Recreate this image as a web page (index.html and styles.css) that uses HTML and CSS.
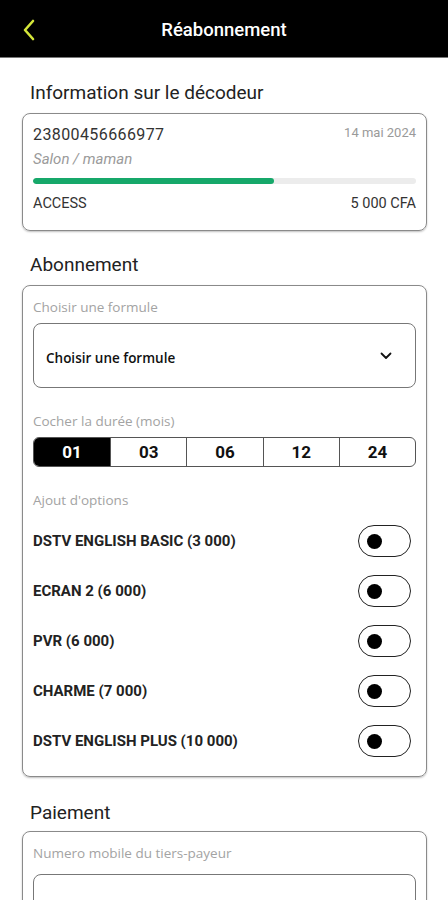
FILE: index.html
```html
<!DOCTYPE html>
<html lang="fr">
<head>
<meta charset="utf-8">
<title>Réabonnement</title>
<link rel="stylesheet" href="styles.css">
</head>
<body>
<header class="topbar">
  <span class="back">
    <svg width="14" height="22" viewBox="0 0 14 22"><path d="M11 2 L3 11 L11 20" fill="none" stroke="#d4e63a" stroke-width="2.6" stroke-linecap="round" stroke-linejoin="round"/></svg>
  </span>
  <h1 class="topbar-title">Réabonnement</h1>
</header>
<main class="content">
  <h2 class="section-title first">Information sur le décodeur</h2>
  <section class="card info-card">
    <div class="row between">
      <span class="decoder-num">23800456666977</span>
      <span class="date">14 mai 2024</span>
    </div>
    <div class="location">Salon / maman</div>
    <div class="progress"><div class="progress-fill" style="width:63%"></div></div>
    <div class="row between plan-row">
      <span>ACCESS</span>
      <span>5 000 CFA</span>
    </div>
  </section>

  <h2 class="section-title">Abonnement</h2>
  <section class="card form-card">
    <div class="label">Choisir une formule</div>
    <div class="select">
      <span>Choisir une formule</span>
      <svg width="12" height="8" viewBox="0 0 12 8"><path d="M1.5 1.5 L6 6 L10.5 1.5" fill="none" stroke="#111" stroke-width="1.8" stroke-linecap="round" stroke-linejoin="round"/></svg>
    </div>
    <div class="label gap-lg">Cocher la durée (mois)</div>
    <div class="segments">
      <div class="seg active">01</div>
      <div class="seg">03</div>
      <div class="seg">06</div>
      <div class="seg">12</div>
      <div class="seg">24</div>
    </div>
    <div class="label gap-lg">Ajout d'options</div>
    <div class="options">
      <div class="option"><span>DSTV ENGLISH BASIC (3 000)</span><span class="toggle"><span class="knob"></span></span></div>
      <div class="option"><span>ECRAN 2 (6 000)</span><span class="toggle"><span class="knob"></span></span></div>
      <div class="option"><span>PVR (6 000)</span><span class="toggle"><span class="knob"></span></span></div>
      <div class="option"><span>CHARME (7 000)</span><span class="toggle"><span class="knob"></span></span></div>
      <div class="option"><span>DSTV ENGLISH PLUS (10 000)</span><span class="toggle"><span class="knob"></span></span></div>
    </div>
  </section>

  <h2 class="section-title last">Paiement</h2>
  <section class="card pay-card">
    <div class="label">Numero mobile du tiers-payeur</div>
    <div class="input"></div>
  </section>
</main>
</body>
</html>
```

FILE: styles.css
```css
* { box-sizing: border-box; }
html, body { margin: 0; padding: 0; }
body {
  font-family: Roboto, "Liberation Sans", sans-serif;
  background: #fff;
  color: #222;
  width: 448px;
  height: 900px;
  overflow: hidden;
}
.topbar {
  height: 58px;
  background: #000;
  border-bottom: 1px solid #777;
  display: flex;
  align-items: center;
  justify-content: center;
  position: relative;
}
.back {
  position: absolute;
  left: 22px;
  top: 19px;
  display: flex;
}
.topbar-title {
  margin: 0;
  color: #fff;
  font-size: 18.5px;
  font-weight: 500;
  line-height: 22px;
  padding-top: 2px;
}
.content {
  padding: 0 21px 0 22px;
}
.section-title {
  margin: 22px 0 8px 8px;
  font-size: 19px;
  font-weight: 400;
  line-height: 24px;
  color: #222;
}
.section-title.first { margin-top: 23px; }
.section-title.last { margin-top: 24px; margin-bottom: 6px; }
.card {
  border: 1px solid #8a8a8a;
  border-radius: 8px;
  box-shadow: 0 1px 2px rgba(0,0,0,0.25);
  padding: 0 10px;
}
.row { display: flex; align-items: center; }
.between { justify-content: space-between; }
.info-card { padding-top: 11px; padding-bottom: 17px; }
.info-card .row:first-child { align-items: flex-start; height: 20px; }
.decoder-num { font-size: 16px; letter-spacing: 0.4px; line-height: 20px; color: #333; }
.date { font-size: 13px; line-height: 16px; color: #9a9a9a; }
.location { margin-top: 5px; font-size: 15px; line-height: 18px; font-style: italic; color: #9a9a9a; }
.progress {
  margin-top: 10px;
  height: 6px;
  background: #ececec;
  border-radius: 3px;
  overflow: hidden;
}
.progress-fill { height: 100%; background: #16a86a; border-radius: 3px; }
.plan-row { margin-top: 11px; font-size: 14.5px; line-height: 18px; color: #333; }

.form-card { padding-top: 12px; padding-bottom: 10px; }
.label {
  font-family: "Open Sans", Roboto, sans-serif;
  font-size: 13.5px;
  line-height: 18px;
  color: #a3a3a3;
}
.gap-lg { margin-top: 24px; }
.select {
  margin-top: 7px;
  height: 65px;
  border: 1px solid #777;
  border-radius: 8px;
  display: flex;
  align-items: center;
  justify-content: space-between;
  padding: 0 23px 0 12px;
  font-family: "Open Sans", Roboto, sans-serif;
  font-size: 13.5px;
  font-weight: 600;
  color: #111;
}
.select span { padding-top: 4px; }
.segments {
  margin-top: 7px;
  height: 30px;
  border: 1px solid #555;
  border-radius: 6px;
  display: grid;
  grid-template-columns: repeat(5, 1fr);
  overflow: hidden;
}
.seg {
  display: flex;
  align-items: center;
  justify-content: center;
  font-size: 17px;
  font-weight: 700;
  color: #111;
  border-left: 1px solid #555;
}
.seg:first-child { border-left: none; }
.seg.active { background: #000; color: #fff; }
.options { margin-top: 7px; }
.option {
  height: 50px;
  display: flex;
  align-items: center;
  justify-content: space-between;
  font-size: 15px;
  font-weight: 700;
  color: #222;
  padding-right: 5px;
}
.toggle {
  width: 53px;
  height: 32px;
  border: 1.5px solid #222;
  border-radius: 16px;
  display: flex;
  align-items: center;
  padding-left: 8px;
}
.knob {
  width: 15px;
  height: 15px;
  border-radius: 50%;
  background: #000;
}
.pay-card { padding-top: 12px; height: 120px; }
.input {
  margin-top: 12px;
  height: 60px;
  border: 1px solid #777;
  border-radius: 8px;
}
```
